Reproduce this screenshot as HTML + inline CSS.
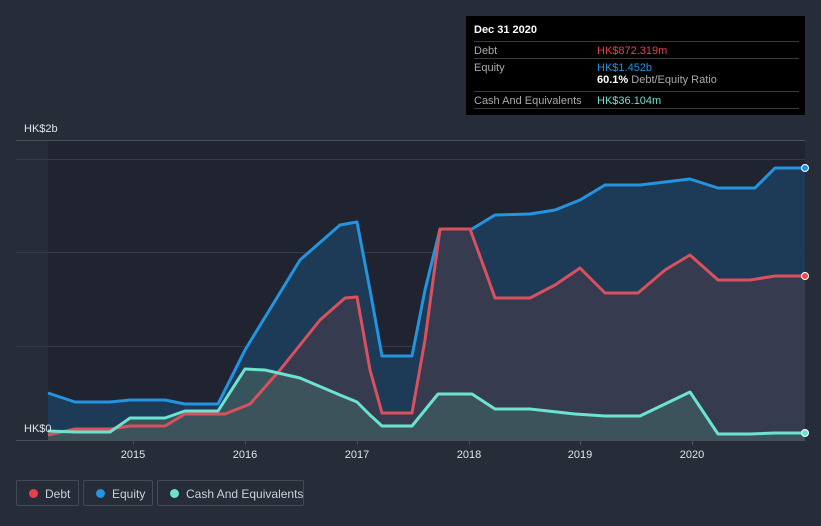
<!DOCTYPE html>
<html><head><style>
body{margin:0;background:#262c38;font-family:"Liberation Sans",sans-serif;}
.w{position:relative;width:821px;height:526px;overflow:hidden;background:#262c38}
.tip{position:absolute;left:466px;top:16px;width:339px;height:99px;background:#000;color:#fff;font-size:11px}
.tip .r{position:absolute;left:8px;right:6px;border-top:1px solid #3a3a3a;height:17px}
.tip span{position:absolute;top:3px;white-space:nowrap}
.leg{position:absolute;top:480px;height:26px;border:1px solid #434a56;border-radius:2px;color:#ccd0d6;font-size:12px;line-height:26px;box-sizing:border-box;white-space:nowrap}
.leg i{position:absolute;top:8px;width:9px;height:9px;border-radius:50%}
</style></head><body><div class="w">
<svg width="821" height="526" style="position:absolute;left:0;top:0">
<rect x="48" y="140" width="757" height="300" fill="#1f2430"/>
<g stroke="#353b47" stroke-width="1">
<line x1="16" y1="159.5" x2="805" y2="159.5"/><line x1="16" y1="252.5" x2="805" y2="252.5"/><line x1="16" y1="346.5" x2="805" y2="346.5"/>
</g>
<line x1="16" y1="140.5" x2="805" y2="140.5" stroke="#4a505c"/>
<line x1="16" y1="440.5" x2="805" y2="440.5" stroke="#4a505c"/>
<g stroke="#4a505c"><line x1="133.5" y1="440" x2="133.5" y2="445"/><line x1="245.5" y1="440" x2="245.5" y2="445"/><line x1="357.5" y1="440" x2="357.5" y2="445"/><line x1="469.5" y1="440" x2="469.5" y2="445"/><line x1="580.5" y1="440" x2="580.5" y2="445"/><line x1="692.5" y1="440" x2="692.5" y2="445"/></g>
<path d="M48,393 L75,402 110,402 130,400 165,400 185,404 218,404 245,350 300,260 340,225 357,222 370,290 382,356 412,356 425,290 440,229 472,229 495,215 530,214 555,210 580,200 605,185 640,185 690,179 718,188 755,188 775,168 805,168 L805,440 48,440Z" fill="#1d3e5c" opacity="0.9"/>
<path d="M48,435 L75,429 110,429 130,426 165,426 185,414 225,414 250,404 280,370 320,320 345,298 357,297 370,370 382,413 412,413 425,340 440,229 470,229 485,270 495,298 530,298 555,285 580,268 605,293 638,293 665,270 690,255 718,280 750,280 775,276 805,276 L805,440 48,440Z" fill="#3c3c4e" opacity="0.85"/>
<path d="M48,431 L75,432 110,432 130,418 165,418 185,411 218,411 245,369 265,370 300,378 340,395 357,402 370,415 382,426 412,426 425,410 438,394 472,394 495,409 530,409 575,414 605,416 640,416 690,392 718,434 750,434 775,433 805,433 L805,440 48,440Z" fill="#3e5a5e" opacity="0.8"/>
<g fill="none" stroke-width="3" stroke-linejoin="round">
<path d="M48,393 L75,402 110,402 130,400 165,400 185,404 218,404 245,350 300,260 340,225 357,222 370,290 382,356 412,356 425,290 440,229 472,229 495,215 530,214 555,210 580,200 605,185 640,185 690,179 718,188 755,188 775,168 805,168" stroke="#2394df"/>
<path d="M48,435 L75,429 110,429 130,426 165,426 185,414 225,414 250,404 280,370 320,320 345,298 357,297 370,370 382,413 412,413 425,340 440,229 470,229 485,270 495,298 530,298 555,285 580,268 605,293 638,293 665,270 690,255 718,280 750,280 775,276 805,276" stroke="#d9505e"/>
<path d="M48,431 L75,432 110,432 130,418 165,418 185,411 218,411 245,369 265,370 300,378 340,395 357,402 370,415 382,426 412,426 425,410 438,394 472,394 495,409 530,409 575,414 605,416 640,416 690,392 718,434 750,434 775,433 805,433" stroke="#6ce3d0"/>
</g>
<circle cx="805" cy="168" r="3.5" fill="#2394df" stroke="#fff" stroke-width="1"/>
<circle cx="805" cy="276" r="3.5" fill="#e84a55" stroke="#fff" stroke-width="1"/>
<circle cx="805" cy="433" r="3.5" fill="#6ce3d0" stroke="#fff" stroke-width="1"/>
<g fill="#e0e3e8" font-size="11" font-family="Liberation Sans,sans-serif">
<text x="24" y="132">HK$2b</text><text x="24" y="432">HK$0</text>
<g text-anchor="middle"><text x="133" y="458">2015</text><text x="245" y="458">2016</text><text x="357" y="458">2017</text><text x="469" y="458">2018</text><text x="580" y="458">2019</text><text x="692" y="458">2020</text></g>
</g>
</svg>
<div class="tip">
<div style="position:absolute;left:8px;top:8px;font-weight:bold">Dec 31 2020</div>
<div class="r" style="top:25px"><span style="color:#aaa">Debt</span><span style="left:123px;color:#e8404a">HK$872.319m</span></div>
<div class="r" style="top:42px"><span style="color:#aaa">Equity</span><span style="left:123px;color:#2394df">HK$1.452b</span></div>
<div class="r" style="top:58px;border-top:none"><span style="left:123px;top:0"><b>60.1%</b> <span style="position:static;color:#aaa">Debt/Equity Ratio</span></span></div>
<div class="r" style="top:75px"><span style="color:#aaa">Cash And Equivalents</span><span style="left:123px;color:#6ce3d0">HK$36.104m</span></div>
<div class="r" style="top:92px;height:0"></div>
</div>
<div class="leg" style="left:16px;width:63px"><i style="left:12px;background:#e8404a"></i><span style="position:absolute;left:28px">Debt</span></div>
<div class="leg" style="left:83px;width:70px"><i style="left:12px;background:#2394df"></i><span style="position:absolute;left:28px">Equity</span></div>
<div class="leg" style="left:157px;width:147px"><i style="left:12px;background:#6ce3d0"></i><span style="position:absolute;left:28px">Cash And Equivalents</span></div>
</div></body></html>
